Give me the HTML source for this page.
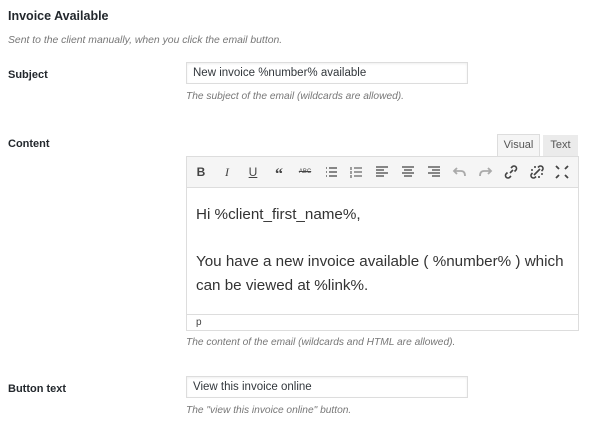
<!DOCTYPE html>
<html><head><style>
*{margin:0;padding:0;box-sizing:border-box}
body{width:600px;height:435px;background:#fff;font-family:"Liberation Sans",sans-serif;color:#23282d;position:relative;overflow:hidden}
.a{position:absolute;white-space:nowrap}
.lbl{font-size:11px;font-weight:bold;left:8px}
.help{font-size:10.2px;font-style:italic;color:#777;left:186px}
.inp{position:absolute;left:186px;width:282px;height:22px;border:1px solid #ddd;box-shadow:inset 0 1px 2px rgba(0,0,0,.07);font-size:11.5px;padding:4px 6px;color:#32373c}
.ic{position:absolute;top:164px;width:16px;height:16px;font-size:12px;color:#444;text-align:center;line-height:16px}
svg.ic{stroke:#444;fill:none;stroke-width:1.3}
</style></head><body>
<div class="a" style="left:8px;top:9px;font-size:12.5px;font-weight:bold">Invoice Available</div>
<div class="a" style="left:8px;top:35px;font-size:10.4px;font-style:italic;color:#777">Sent to the client manually, when you click the email button.</div>
<div class="a lbl" style="top:69px">Subject</div>
<div class="inp" style="top:62px">New invoice %number% available</div>
<div class="a help" style="top:91px">The subject of the email (wildcards are allowed).</div>
<div class="a lbl" style="top:138px">Content</div>
<div class="a" style="left:497px;top:134px;width:43px;height:23px;background:#f5f5f5;border:1px solid #ddd;border-bottom:none;font-size:11px;color:#555;text-align:center;line-height:21px">Visual</div>
<div class="a" style="left:543px;top:135px;width:35px;height:21px;background:#ebebeb;font-size:11px;color:#555;text-align:center;line-height:21px">Text</div>
<div class="a" style="left:186px;top:156px;width:393px;height:175px;border:1px solid #ddd;background:#fff"></div>
<div class="a" style="left:187px;top:157px;width:391px;height:31px;background:#f5f5f5;border-bottom:1px solid #ddd"></div>
<div class="ic" style="left:193px;font-weight:bold">B</div>
<div class="ic" style="left:219px;font-style:italic;font-family:'Liberation Serif',serif">I</div>
<div class="ic" style="left:245px;text-decoration:underline">U</div>
<div class="ic" style="left:271px;font-weight:bold;font-size:16px;line-height:22px;font-family:'Liberation Serif',serif">&#8220;</div>
<div class="ic" style="left:297px;font-size:6px;text-decoration:line-through">ABC</div>
<svg class="ic" style="left:323px" viewBox="0 0 16 16"><path d="M3 4h1M3 8h1M3 12h1M6 4h8M6 8h8M6 12h8"/></svg>
<svg class="ic" style="left:348px" viewBox="0 0 16 16"><path d="M3 3v3M3 7v3M3 11v3M6 4h8M6 8h8M6 12h8" stroke-width="1"/></svg>
<svg class="ic" style="left:374px" viewBox="0 0 16 16"><path d="M2 3h12M2 6h8M2 9h12M2 12h8"/></svg>
<svg class="ic" style="left:400px" viewBox="0 0 16 16"><path d="M2 3h12M4 6h8M2 9h12M4 12h8"/></svg>
<svg class="ic" style="left:426px" viewBox="0 0 16 16"><path d="M2 3h12M6 6h8M2 9h12M6 12h8"/></svg>
<svg class="ic" style="left:452px;stroke:#aaa;stroke-width:1.8" viewBox="0 0 16 16"><path d="M5 4L2 7l3 3M2 7h7q4 0 4 5"/></svg>
<svg class="ic" style="left:477px;stroke:#aaa;stroke-width:1.8" viewBox="0 0 16 16"><path d="M11 4l3 3-3 3M14 7H7q-4 0-4 5"/></svg>
<svg class="ic" style="left:503px;stroke-width:1.6" viewBox="0 0 16 16"><path d="M7 9l3-3M8 4l1.5-1.5a2.5 2.5 0 0 1 3.5 3.5L11.5 7.5M8 12l-1.5 1.5a2.5 2.5 0 0 1-3.5-3.5L4.5 8.5"/></svg>
<svg class="ic" style="left:529px;stroke-width:1.6" viewBox="0 0 16 16"><path d="M9 3.5l1-1a2.5 2.5 0 0 1 3.5 3.5l-1 1M7 12.5l-1 1a2.5 2.5 0 0 1-3.5-3.5l1-1M6 2v2M2 6h2M10 14v-2M14 10h-2M5 11l6-6"/></svg>
<svg class="ic" style="left:554px;stroke-width:1.8" viewBox="0 0 16 16"><path d="M2 2l3 3M14 2l-3 3M2 14l3-3M14 14l-3-3"/></svg>
<div class="a" style="left:196px;top:206px;font-size:15.2px;color:#333">Hi %client_first_name%,</div>
<div class="a" style="left:196px;top:253px;font-size:15.2px;color:#333">You have a new invoice available ( %number% ) which</div>
<div class="a" style="left:196px;top:277px;font-size:15.2px;color:#333">can be viewed at %link%.</div>
<div class="a" style="left:187px;top:314px;width:391px;height:16px;border-top:1px solid #ddd;font-size:10px;color:#444;padding:2px 9px">p</div>
<div class="a help" style="top:337px">The content of the email (wildcards and HTML are allowed).</div>
<div class="a lbl" style="top:383px">Button text</div>
<div class="inp" style="top:376px">View this invoice online</div>
<div class="a help" style="top:405px">The "view this invoice online" button.</div>
</body></html>
